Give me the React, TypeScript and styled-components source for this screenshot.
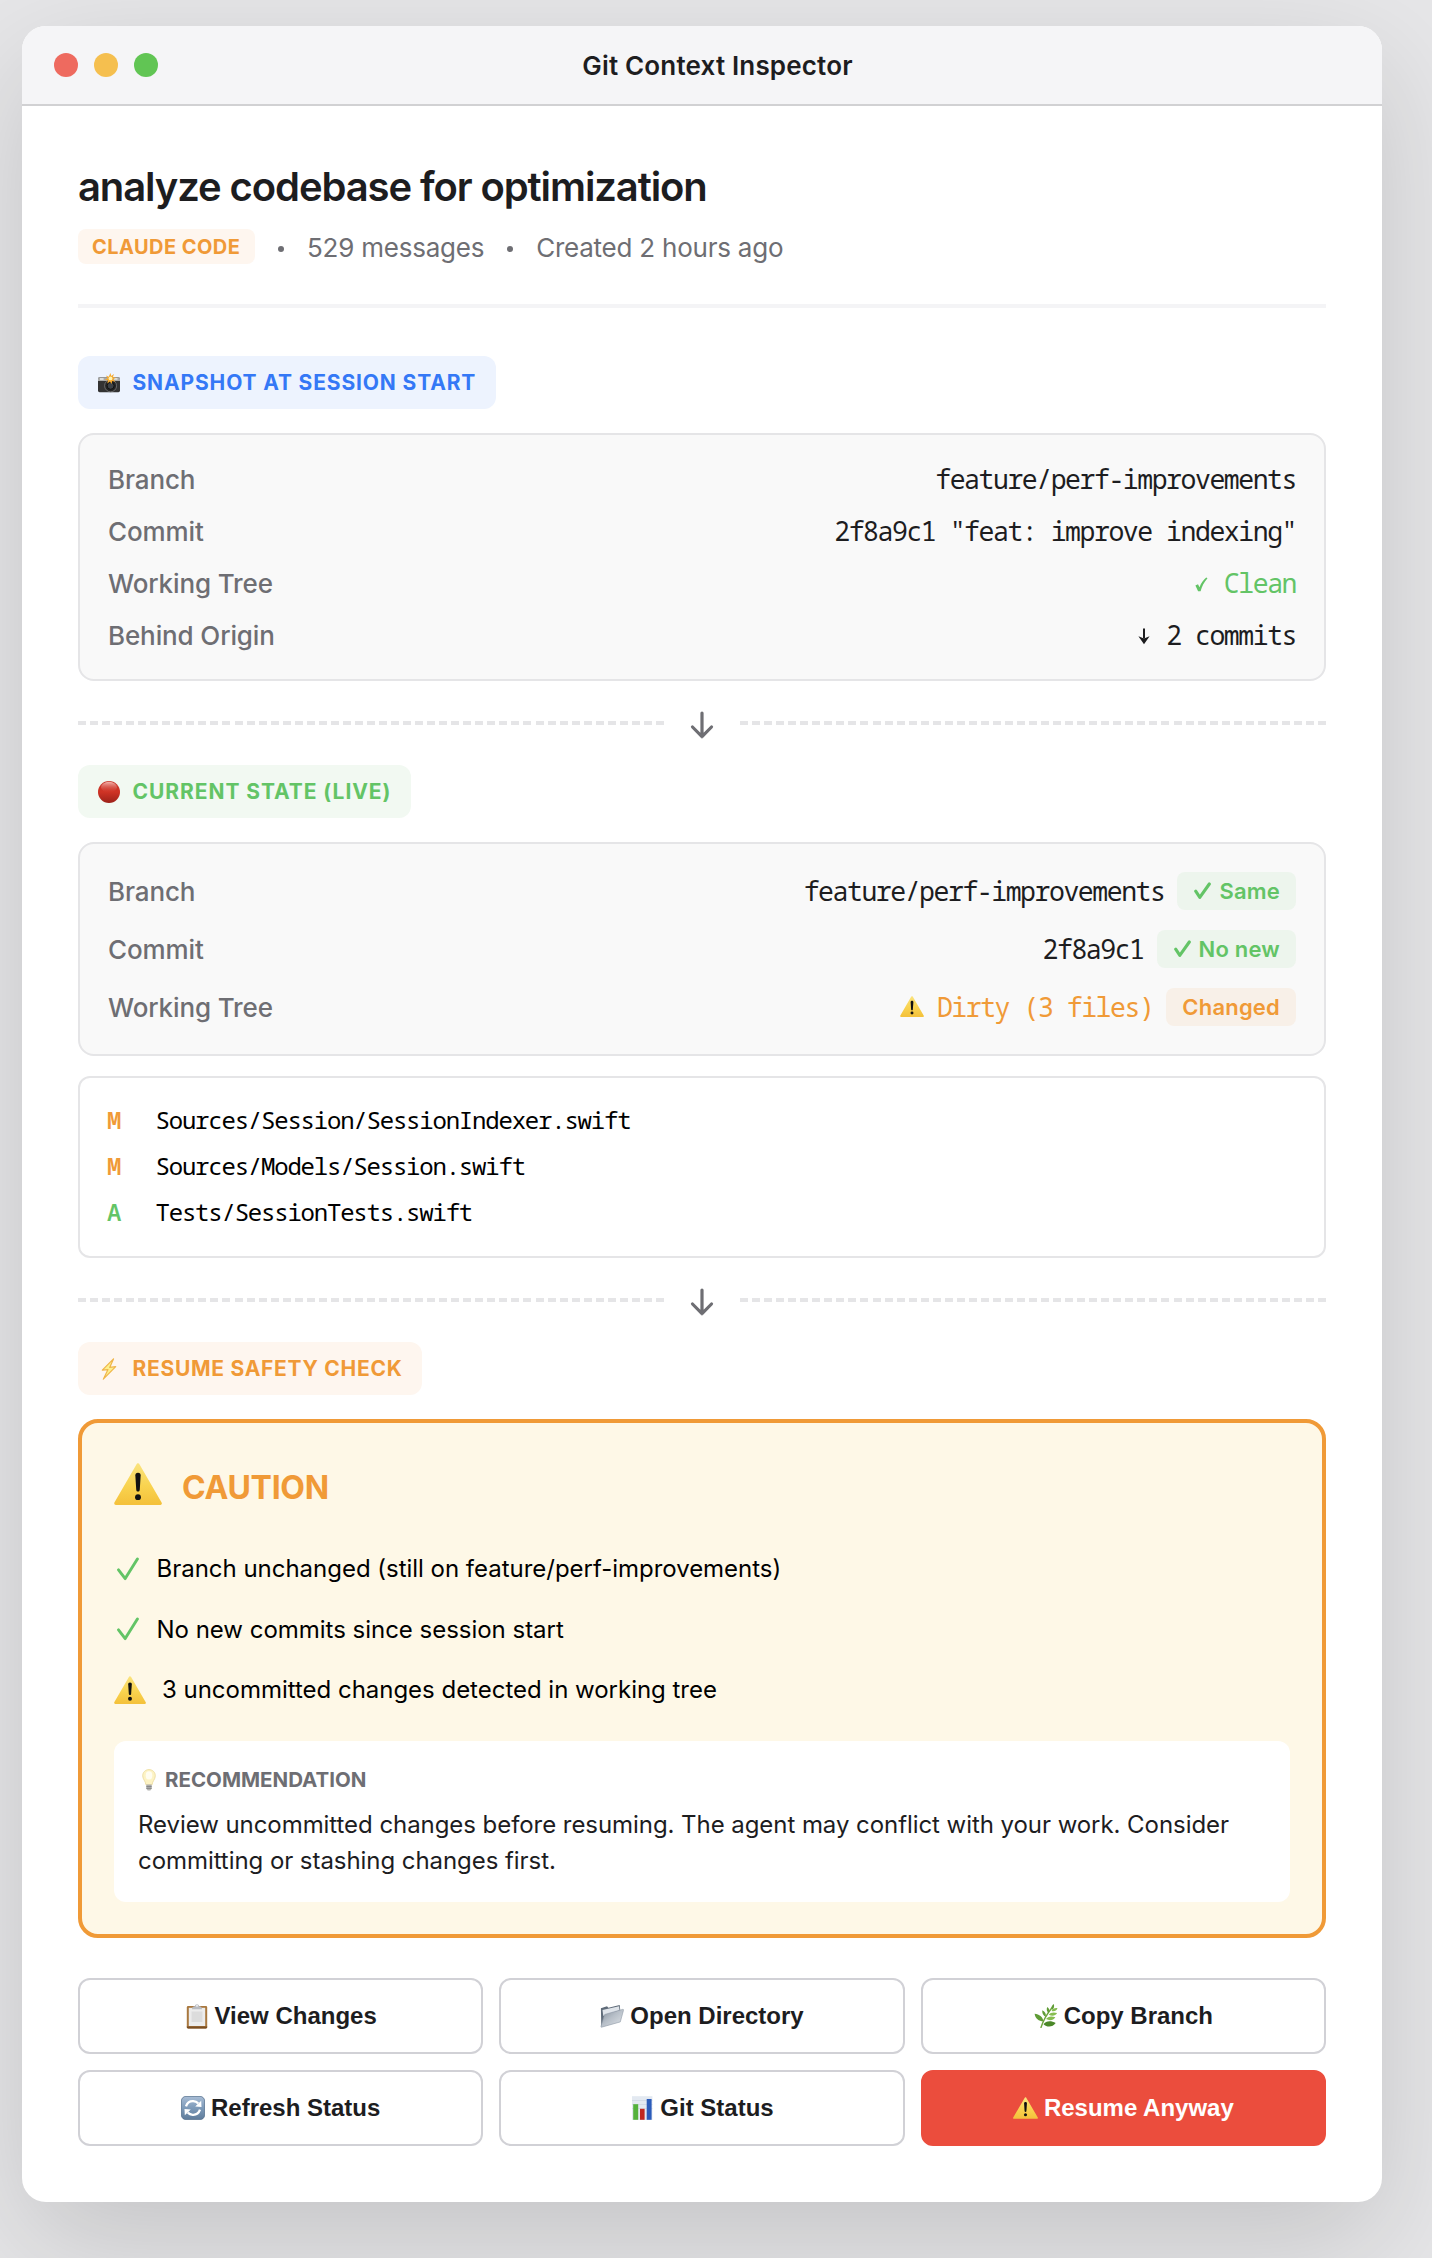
import React, { useId } from 'react';
import styled, { createGlobalStyle } from 'styled-components';

const color = {
  ink: '#1d1d1f',
  muted: '#6e6e73',
  line: '#e5e5e7',
  orange: '#f09a37',
  green: '#63c466',
  blue: '#3478f6',
  red: '#eb4d3d',
};

const mono = '"Noto Sans Mono", "DejaVu Sans Mono", monospace';

const GlobalStyle = createGlobalStyle`
  *, *::before, *::after { box-sizing: border-box; }
  body {
    margin: 0;
    background: #e6e6e8;
    font-family: Inter, "Open Sans", sans-serif;
    color: ${color.ink};
  }
  svg { display: block; flex: none; }
`;

/* ---------- layout ---------- */

const Page = styled.main`
  display: flex;
  align-items: flex-start;
  width: 1432px;
  height: 2258px;
  padding: 26px 50px 56px 22px;
  overflow: hidden;
`;

const Window = styled.section`
  flex: 1;
  border-radius: 24px;
  background: #fff;
  overflow: hidden;
  box-shadow: 0 40px 120px rgba(0, 0, 0, 0.15);
`;

const TitleBar = styled.header`
  display: flex;
  align-items: center;
  height: 80px;
  padding: 0 32px;
  background: #f5f5f7;
  border-bottom: 2px solid #d1d1d3;
`;

const Lights = styled.div`
  display: flex;
  gap: 16px;
`;

const Light = styled.span<{ $fill: string }>`
  width: 24px;
  height: 24px;
  border-radius: 50%;
  background: ${(p) => p.$fill};
`;

const WindowTitle = styled.div`
  flex: 1;
  margin-right: 73px;
  padding-top: 2px;
  text-align: center;
  font-size: 26px;
  font-weight: 600;
  line-height: 32px;
  letter-spacing: 0.17px;
`;

const Content = styled.div`
  display: flex;
  flex-direction: column;
  align-items: stretch;
  padding: 56px;
`;

const SessionHeader = styled.div`
  display: flex;
  flex-direction: column;
  gap: 18px;
  padding-bottom: 40px;
  margin-bottom: 48px;
  border-bottom: 4px solid #f4f4f6;
`;

const SessionTitle = styled.h1`
  margin: 0;
  font-size: 40px;
  font-weight: 600;
  line-height: 49px;
  letter-spacing: -1.1px;
`;

const Meta = styled.div`
  display: flex;
  align-items: center;
  height: 35px;
  font-size: 26px;
  line-height: 32px;
  letter-spacing: -0.23px;
  color: ${color.muted};
`;

const AgentBadge = styled.span`
  display: flex;
  align-items: center;
  height: 35px;
  width: 177px;
  padding: 1px 0 0 14px;
  margin-right: 23px;
  border-radius: 8px;
  background: #fef6ef;
  color: ${color.orange};
  font-size: 20px;
  font-weight: 700;
  line-height: 24px;
  letter-spacing: 0.45px;
  white-space: nowrap;
`;

const MetaText = styled.span`
  padding-top: 2px;
`;

const Dot = styled.span`
  width: 6px;
  height: 6px;
  margin: 4px 23px 0 0;
  border-radius: 50%;
  background: ${color.muted};

  ${MetaText} + & {
    margin-left: 23px;
  }
`;

const SectionLabel = styled.div<{ $fg: string; $bg: string; $tracking: number }>`
  display: flex;
  align-items: center;
  align-self: flex-start;
  gap: 12.5px;
  height: 53px;
  padding: 0 20px;
  margin-bottom: 24px;
  border-radius: 12px;
  background: ${(p) => p.$bg};
  color: ${(p) => p.$fg};
  font-size: 21px;
  font-weight: 700;
  line-height: 27px;
  letter-spacing: ${(p) => p.$tracking}px;
  white-space: nowrap;
`;

const Card = styled.div`
  padding: 18px 28px;
  border: 2px solid ${color.line};
  border-radius: 16px;
  background: #f9f9f9;
`;

const Row = styled.div<{ $height: number }>`
  display: flex;
  align-items: center;
  justify-content: space-between;
  height: ${(p) => p.$height}px;
  font-size: 26px;
  line-height: 32px;
`;

const Key = styled.span`
  padding-top: 2px;
  color: ${color.muted};
  font-weight: 500;
  letter-spacing: -0.12px;
`;

const Value = styled.span<{ $tone?: string }>`
  display: flex;
  align-items: center;
  color: ${(p) => p.$tone ?? color.ink};
`;

const Code = styled.span`
  padding-bottom: 1px;
  font-family: ${mono};
  font-size: 26.5px;
  letter-spacing: -1.47px;
  white-space: pre;
`;

const StatusBadge = styled.span<{ $fg: string; $bg: string }>`
  display: flex;
  align-items: center;
  gap: 8px;
  height: 38px;
  padding: 0 16px;
  margin-left: 13px;
  border-radius: 8px;
  background: ${(p) => p.$bg};
  color: ${(p) => p.$fg};
  font-size: 22px;
  font-weight: 600;
  letter-spacing: 0.2px;

  svg {
    margin-left: 1px;
  }
`;

const Connector = styled.div`
  display: flex;
  align-items: center;
  height: 84px;
`;

const Dashes = styled.span<{ $to: 'left' | 'right' }>`
  flex: 1;
  height: 4px;
  background: repeating-linear-gradient(
    to ${(p) => p.$to},
    ${color.line} 0,
    ${color.line} 8px,
    transparent 8px,
    transparent 12.04px
  );
`;

const ArrowSlot = styled.span`
  display: flex;
  justify-content: center;
  width: 69px;
  padding-top: 4px;
`;

const FileList = styled.div`
  margin-top: 20px;
  padding: 19px 26px 21px;
  border: 2px solid ${color.line};
  border-radius: 12px;
  background: #fff;
`;

const FileRow = styled.div`
  display: flex;
  align-items: center;
  height: 46px;
  font-family: ${mono};
  font-size: 24px;
  line-height: 32px;
  letter-spacing: -1.21px;
  color: #000;
`;

const FileStatus = styled.span<{ $tone: string }>`
  width: 49.5px;
  padding-left: 1px;
  color: ${(p) => p.$tone};
  font-weight: 600;
`;

const Caution = styled.div`
  padding: 32px;
  border: 4px solid ${color.orange};
  border-radius: 20px;
  background: #fef8e7;
`;

const CautionHeader = styled.div`
  display: flex;
  align-items: center;
  gap: 20px;
  height: 64px;
  margin-bottom: 19px;
  padding-top: 1px;
  color: ${color.orange};
  font-size: 32px;
  font-weight: 700;
  line-height: 41px;
  letter-spacing: -0.3px;
`;

const Lifted = styled.span`
  padding-bottom: 7px;
`;

const CheckItem = styled.div`
  display: flex;
  align-items: center;
  gap: 16px;
  height: 60.5px;
  padding-top: 1px;
  font-size: 24px;
  line-height: 33px;
  letter-spacing: -0.02px;
  color: #000;
`;

const CheckSlot = styled.span`
  padding: 0 1.5px 0 3px;
`;

const Recommendation = styled.div`
  height: 161px;
  margin-top: 21.5px;
  padding: 24px;
  border-radius: 12px;
  background: #fff;
`;

const RecommendationTitle = styled.div`
  display: flex;
  align-items: center;
  gap: 9px;
  height: 29px;
  margin-bottom: 12.5px;
  padding-left: 4px;
  color: ${color.muted};
  font-size: 20.5px;
  font-weight: 700;
  letter-spacing: 0;
`;

const RecommendationText = styled.p`
  margin: 0;
  font-size: 24px;
  line-height: 36px;
  letter-spacing: -0.06px;
`;

const Actions = styled.div`
  display: grid;
  grid-template-columns: repeat(3, 1fr);
  gap: 16px;
  margin-top: 40px;
`;

const Action = styled.button<{ $danger?: boolean }>`
  display: flex;
  align-items: center;
  justify-content: center;
  gap: 6px;
  height: 76px;
  padding: 0;
  border: 2px solid ${(p) => (p.$danger ? color.red : '#d1d1d6')};
  border-radius: 12px;
  background: ${(p) => (p.$danger ? color.red : '#fff')};
  color: ${(p) => (p.$danger ? '#fff' : color.ink)};
  font-family: "Liberation Sans", Arial, sans-serif;
  font-size: 24px;
  font-weight: 700;
  line-height: 28px;
`;

/* ---------- icons ---------- */

const Check = ({ size }: { size: 'small' | 'large' }) =>
  size === 'small' ? (
    <svg width="17" height="18" viewBox="0 0 17 18" fill="none">
      <path d="M1.700 9.200 5.800 15.400 15.300 2" stroke={color.green} strokeWidth="3.100" strokeLinecap="round" strokeLinejoin="round" />
    </svg>
  ) : (
    <svg width="22" height="24" viewBox="0 0 22 24" fill="none">
      <path d="M1.500 12.800 8.200 21.600 20.400 2" stroke={color.green} strokeWidth="2.900" strokeLinecap="round" strokeLinejoin="round" />
    </svg>
  );

const MonoCheck = () => (
  <svg width="13" height="15" viewBox="0 0 13 15">
    <path d="M.4 8.600 3 7.200 4.500 10.200C6 6.400 8.400 3 11.200.6l1.300.7C9.200 5 6.800 9.400 5.600 14.200H3.100Z" fill={color.green} />
  </svg>
);

const MonoArrow = () => (
  <svg width="12" height="17" viewBox="0 0 12 17">
    <path d="M5 .5h2v10h-2Z" fill={color.ink} />
    <path d="M.4 8.200 6 10.400l5.600-2.200L6 16.300Z" fill={color.ink} />
  </svg>
);

const DownArrow = () => (
  <svg width="24" height="28" viewBox="0 0 24 28" fill="none">
    <path d="M12 2v23.500M2.500 16 12 25.700 21.500 16" stroke={color.muted} strokeWidth="3.200" strokeLinecap="round" strokeLinejoin="round" />
  </svg>
);

const Warning = ({ width }: { width: number }) => {
  const id = useId();
  return (
    <svg width={width} height={width * 0.885} viewBox="0 0 52 46">
      <defs>
        <linearGradient id={id} x1="0" y1="0" x2="0" y2="1">
          <stop offset="0" stopColor="#fae27a" />
          <stop offset=".55" stopColor="#f9d34f" />
          <stop offset="1" stopColor="#f4c23c" />
        </linearGradient>
      </defs>
      <path d="M26 2.200 50 43.600H2Z" fill={`url(#${id})`} stroke={`url(#${id})`} strokeWidth="3.600" strokeLinejoin="round" />
      <path d="M26 10.500c2 0 3 1.200 2.900 3L27.900 29c-.1 1.400-.8 2-1.900 2s-1.800-.6-1.900-2l-1-15.500c-.1-1.800.9-3 2.900-3Z" fill="#111" />
      <circle cx="26" cy="37" r="3.200" fill="#111" />
    </svg>
  );
};

const Camera = () => (
  <svg width="22" height="20" viewBox="0 0 22 20">
    <rect x="0" y="4.200" width="22" height="15" rx="1.600" fill="#333" />
    <path d="M0 8V5.800C0 4.900.7 4.200 1.600 4.200h18.800c.9 0 1.600.7 1.600 1.600V8Z" fill="#a9a9a7" />
    <rect x="2" y="5.200" width="3.600" height="1.600" fill="#e9e9e6" />
    <rect x="16" y="5" width="3.500" height="1.800" fill="#dcdcd8" />
    <circle cx="12.600" cy="12.800" r="6" fill="#242424" stroke="#777" strokeWidth=".8" />
    <circle cx="12.600" cy="12.800" r="3.500" fill="#3d4145" stroke="#111" strokeWidth="1" />
    <path d="m12.400 0 .9 3 2.600-2-1 3.200 3.100.2-2.800 1.900 2.200 2.500-3.200-.7-.6 3-1.700-2.600-2.600 2 .7-3.200-3.200-.4 2.800-1.700-1.700-2.700 2.900 1.200Z" fill="#f7a92d" />
    <circle cx="12.500" cy="5.400" r="1.900" fill="#fff3b0" />
  </svg>
);

const RedCircle = () => (
  <svg width="22" height="22" viewBox="0 0 22 22">
    <defs>
      <linearGradient id="redBody" x1="0" y1="0" x2="0" y2="1">
        <stop offset="0" stopColor="#c8382b" />
        <stop offset=".5" stopColor="#cf3325" />
        <stop offset="1" stopColor="#9c2119" />
      </linearGradient>
      <linearGradient id="redGloss" x1="0" y1="0" x2="0" y2="1">
        <stop offset="0" stopColor="#f4b5ae" />
        <stop offset="1" stopColor="#d5483b" stopOpacity="0" />
      </linearGradient>
    </defs>
    <circle cx="11" cy="11" r="11" fill="url(#redBody)" />
    <ellipse cx="11" cy="6.200" rx="8" ry="5.400" fill="url(#redGloss)" />
  </svg>
);

const Bolt = () => (
  <svg width="22" height="22" viewBox="0 0 22 22">
    <path d="M15.500.9 4.300 12.100 10 11.600 5.300 21.200 17.700 8.700 11.700 9.400Z" fill="#fdf08c" stroke="#efb54a" strokeWidth="1.200" strokeLinejoin="round" />
  </svg>
);

const Bulb = () => (
  <svg width="14" height="22" viewBox="0 0 14 22">
    <path d="M7 .6c3.600 0 6.300 2.700 6.300 6.100 0 3.800-2.900 5.200-3.200 9H3.900c-.3-3.800-3.200-5.200-3.200-9C.7 3.300 3.400.6 7 .6Z" fill="#fdf3c4" stroke="#ecdca0" strokeWidth=".9" />
    <ellipse cx="7" cy="6.400" rx="3.300" ry="4.200" fill="#fffdf0" />
    <path d="M4.300 15.600h5.400v4.200l-1.400 1.700H5.700l-1.400-1.700Z" fill="#b4b4b2" />
    <path d="M4.300 17.400h5.400M4.300 19.300h5.400" stroke="#777" strokeWidth=".8" />
  </svg>
);

const Clipboard = () => (
  <svg width="24" height="25" viewBox="0 0 24 25">
    <rect x="1.800" y="2" width="20.400" height="22.400" rx="1.400" fill="#a9783f" />
    <path d="M1.800 22.500h20.400v.7c0 .7-.5 1.200-1.200 1.200H3c-.7 0-1.200-.5-1.200-1.200Z" fill="#7a4f24" />
    <rect x="3.800" y="3.800" width="16.400" height="18.200" fill="#ececec" />
    <rect x="6.600" y="7.500" width="10.800" height="10.500" fill="#dcdcdc" />
    <path d="M7 5.200c0-1.800 1.200-2.700 2.800-2.900C10 1 10.900.2 12 .2s2 .8 2.200 2.100c1.600.2 2.800 1.100 2.800 2.900Z" fill="#b9bcc2" />
    <circle cx="12" cy="1.900" r=".8" fill="#fff" />
  </svg>
);

const Folder = () => (
  <svg width="24" height="24" viewBox="0 0 24 24">
    <defs>
      <linearGradient id="folderFront" x1="0" y1="0" x2="1" y2="1">
        <stop offset="0" stopColor="#7f8a97" />
        <stop offset=".45" stopColor="#b6bec7" />
        <stop offset="1" stopColor="#e0e4e9" />
      </linearGradient>
    </defs>
    <path d="M.9 4.300 7 2.300l1.400 1.400L19.700 1l.6 5.500-16 8.500-3 8Z" fill="#5f6b79" />
    <path d="M2.500 6 19 2.200l.5 4L3.300 12Z" fill="#dfe4ea" />
    <path d="M5.300 10.300 22.500 5.400c.8-.2 1.200.2 1 .9l-3.200 11.600L1.600 23.200c-.6.200-.8-.2-.6-.8l3.300-11.200c.2-.5.500-.800 1-.9Z" fill="url(#folderFront)" stroke="#919ba8" strokeWidth=".6" />
  </svg>
);

const Herb = () => (
  <svg width="24" height="24" viewBox="0 0 24 24">
    <path d="M7 23.500C9 17 12.500 10.500 18.500 3" fill="none" stroke="#6fa63f" strokeWidth="1.400" strokeLinecap="round" />
    <g fill="#5f9c35">
      <path d="M18 6c-1-3 0-5 1.800-6 .7 2.200.4 4.400-1.800 6ZM14.800 9.200C12.500 7.200 12.300 5 13.300 2.900c2.100 1.500 2.700 3.800 1.500 6.300ZM11.700 13C8.900 11.200 8 9 8.300 6.300c2.900 1.200 4.100 3.700 3.400 6.700ZM9.500 17.300C4.700 17.200 1.300 14.600.6 9.700c4.700.4 8.200 3.100 8.900 7.600Z" />
    </g>
    <g fill="#86bd4f">
      <path d="M17.500 7c1.200-2.200 3.300-3.200 6-2.800-.8 2.400-3 3.500-6 2.800ZM14.800 10.800c1.700-2.200 4.600-2.900 8.300-1.700-1.700 2.700-4.700 3.400-8.300 1.700ZM12 15c2-2.700 5.200-3.300 9.400-1.800-2.100 3.100-5.600 3.800-9.400 1.800Z" />
    </g>
    <path d="M9.500 20.300c2.300-3.600 7.500-4.300 12.200-1.200-3 4.200-8.500 4.700-12.200 1.200Z" fill="#4b8829" />
  </svg>
);

const Refresh = () => (
  <svg width="24" height="24" viewBox="0 0 24 24">
    <defs>
      <linearGradient id="refreshTile" x1="0" y1="0" x2="0" y2="1">
        <stop offset="0" stopColor="#a8bdd6" />
        <stop offset=".5" stopColor="#7d9ab9" />
        <stop offset="1" stopColor="#5f7c9b" />
      </linearGradient>
    </defs>
    <rect x=".4" y=".4" width="23.200" height="23.200" rx="4.500" fill="url(#refreshTile)" stroke="#55708d" strokeWidth=".8" />
    <path d="M5 10.300C6.200 6.900 9 5 12.300 5.200c2 .1 3.600.9 4.900 2.200M19 13.700c-1.200 3.400-4 5.300-7.300 5.100-2-.1-3.600-.9-4.900-2.200" fill="none" stroke="#fff" strokeWidth="2.300" />
    <path d="m20.200 4.800.3 6.300-6.300-.5ZM3.800 19.200l-.3-6.300 6.300.5Z" fill="#fff" />
  </svg>
);

const Chart = () => (
  <svg width="24" height="24" viewBox="0 0 24 24">
    <rect x="2" y=".2" width="20.400" height="23.800" fill="#e3e9f1" />
    <path d="M2 4.500h20.400M2 8.500h20.400M2 12.500h20.400" stroke="#cdd6e2" strokeWidth=".7" />
    <rect x="3.200" y="8.200" width="5" height="15.600" fill="#54b13c" />
    <rect x="10" y="12.800" width="4.600" height="11" fill="#c0281f" />
    <rect x="16.700" y="3" width="4.900" height="20.800" fill="#2c5cba" />
  </svg>
);

/* ---------- composition ---------- */

const Divider = () => (
  <Connector>
    <Dashes $to="right" />
    <ArrowSlot>
      <DownArrow />
    </ArrowSlot>
    <Dashes $to="left" />
  </Connector>
);

const files = [
  { status: 'M', path: 'Sources/Session/SessionIndexer.swift' },
  { status: 'M', path: 'Sources/Models/Session.swift' },
  { status: 'A', path: 'Tests/SessionTests.swift' },
];

const InlineIcon = styled.span<{ $right: number; $top?: number }>`
  margin-right: ${(p) => p.$right}px;
  padding-top: ${(p) => p.$top ?? 0}px;
`;

export default function App() {
  return (
    <Page>
      <GlobalStyle />
      <Window>
        <TitleBar>
          <Lights>
            <Light $fill="#ee6a5f" />
            <Light $fill="#f5bf4f" />
            <Light $fill="#61c554" />
          </Lights>
          <WindowTitle>Git Context Inspector</WindowTitle>
        </TitleBar>

        <Content>
          <SessionHeader>
            <SessionTitle>analyze codebase for optimization</SessionTitle>
            <Meta>
              <AgentBadge>CLAUDE CODE</AgentBadge>
              <Dot />
              <MetaText>529 messages</MetaText>
              <Dot />
              <MetaText>Created 2 hours ago</MetaText>
            </Meta>
          </SessionHeader>

          <SectionLabel $fg={color.blue} $bg="#edf3fe" $tracking={0.86}>
            <Camera />
            SNAPSHOT AT SESSION START
          </SectionLabel>
          <Card>
            <Row $height={52}>
              <Key>Branch</Key>
              <Value><Code>feature/perf-improvements</Code></Value>
            </Row>
            <Row $height={52}>
              <Key>Commit</Key>
              <Value><Code>2f8a9c1 "feat: improve indexing"</Code></Value>
            </Row>
            <Row $height={52}>
              <Key>Working Tree</Key>
              <Value $tone={color.green}>
                <InlineIcon $right={16} $top={2}><MonoCheck /></InlineIcon>
                <Code>Clean</Code>
              </Value>
            </Row>
            <Row $height={52}>
              <Key>Behind Origin</Key>
              <Value>
                <InlineIcon $right={16} $top={2}><MonoArrow /></InlineIcon>
                <Code>2 commits</Code>
              </Value>
            </Row>
          </Card>

          <Divider />

          <SectionLabel $fg={color.green} $bg="#f2f9f2" $tracking={0.94}>
            <RedCircle />
            CURRENT STATE (LIVE)
          </SectionLabel>
          <Card>
            <Row $height={58}>
              <Key>Branch</Key>
              <Value>
                <Code>feature/perf-improvements</Code>
                <StatusBadge $fg={color.green} $bg="#edf5ed"><Check size="small" />Same</StatusBadge>
              </Value>
            </Row>
            <Row $height={58}>
              <Key>Commit</Key>
              <Value>
                <Code>2f8a9c1</Code>
                <StatusBadge $fg={color.green} $bg="#edf5ed"><Check size="small" />No new</StatusBadge>
              </Value>
            </Row>
            <Row $height={58}>
              <Key>Working Tree</Key>
              <Value $tone={color.orange}>
                <InlineIcon $right={13}><Warning width={24} /></InlineIcon>
                <Code>Dirty (3 files)</Code>
                <StatusBadge $fg={color.orange} $bg="#f8f0e8">Changed</StatusBadge>
              </Value>
            </Row>
          </Card>
          <FileList>
            {files.map((file) => (
              <FileRow key={file.path}>
                <FileStatus $tone={file.status === 'A' ? color.green : color.orange}>{file.status}</FileStatus>
                {file.path}
              </FileRow>
            ))}
          </FileList>

          <Divider />

          <SectionLabel $fg={color.orange} $bg="#fef6ef" $tracking={0.72}>
            <Bolt />
            RESUME SAFETY CHECK
          </SectionLabel>
          <Caution>
            <CautionHeader>
              <Lifted><Warning width={48} /></Lifted>
              CAUTION
            </CautionHeader>
            <CheckItem>
              <CheckSlot><Check size="large" /></CheckSlot>
              Branch unchanged (still on feature/perf-improvements)
            </CheckItem>
            <CheckItem>
              <CheckSlot><Check size="large" /></CheckSlot>
              No new commits since session start
            </CheckItem>
            <CheckItem>
              <Warning width={32} />
              3 uncommitted changes detected in working tree
            </CheckItem>
            <Recommendation>
              <RecommendationTitle><Bulb />RECOMMENDATION</RecommendationTitle>
              <RecommendationText>
                Review uncommitted changes before resuming. The agent may conflict with your work. Consider committing or stashing changes first.
              </RecommendationText>
            </Recommendation>
          </Caution>

          <Actions>
            <Action><Clipboard />View Changes</Action>
            <Action><Folder />Open Directory</Action>
            <Action><Herb />Copy Branch</Action>
            <Action><Refresh />Refresh Status</Action>
            <Action><Chart />Git Status</Action>
            <Action $danger><Warning width={25} />Resume Anyway</Action>
          </Actions>
        </Content>
      </Window>
    </Page>
  );
}
